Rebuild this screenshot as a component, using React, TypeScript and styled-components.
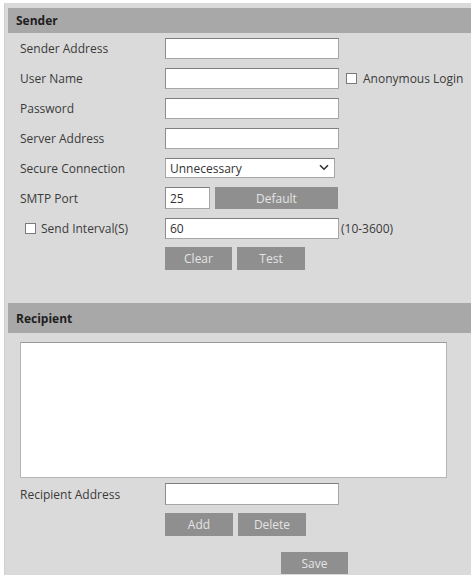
import React, { useState } from "react";
import styled, { createGlobalStyle } from "styled-components";

const GlobalStyle = createGlobalStyle`
  html, body {
    margin: 0;
    padding: 0;
    background: #fff;
  }
  body {
    font-family: "Open Sans", "Liberation Sans", Arial, sans-serif;
    font-size: 12px;
    color: #333;
  }
`;

const Panel = styled.div`
  margin: 3px 0 0 4px;
  width: 467px;
  background: #dadada;
  border-left: 1px solid #cfcfcf;
  padding: 5px 0 1px 3px;
  box-sizing: border-box;
`;

const SectionHeader = styled.div<{ $height: number }>`
  height: ${(p) => p.$height}px;
  background: #a8a8a8;
  display: flex;
  align-items: center;
  padding-left: 8px;
  font-weight: 700;
  font-size: 12px;
  color: #1e1e1e;
`;

const Section = styled.div<{ $bottom: number }>`
  padding-bottom: ${(p) => p.$bottom}px;
`;

const Row = styled.div<{ $height?: number; $indent?: number }>`
  display: flex;
  align-items: center;
  height: ${(p) => p.$height ?? 30}px;
  padding-left: ${(p) => p.$indent ?? 12}px;
`;

const SaveRow = styled(Row)`
  align-items: flex-end;
`;

const Label = styled.label`
  width: 145px;
  flex-shrink: 0;
  display: flex;
  align-items: center;
  color: #3a3a3a;
  white-space: nowrap;
`;

const TextInput = styled.input<{ $width?: number; $height?: number }>`
  width: ${(p) => p.$width ?? 174}px;
  height: ${(p) => p.$height ?? 21}px;
  box-sizing: border-box;
  border: 1px solid #a6a6a6;
  border-top-color: #7d7d7d;
  border-left-color: #8d8d8d;
  background: #fff;
  padding: 0 4px;
  font-family: inherit;
  font-size: 12px;
  color: #333;
  outline: none;
`;

const Check = styled.input.attrs({ type: "checkbox" })`
  appearance: none;
  width: 11px;
  height: 11px;
  margin: 0;
  border: 1px solid #7a7a7a;
  background: #fff;
  box-sizing: border-box;
  flex-shrink: 0;
`;

const CheckLabel = styled.label<{ $gap: number; $offset: number }>`
  display: flex;
  align-items: center;
  gap: ${(p) => p.$gap}px;
  margin-left: ${(p) => p.$offset}px;
  color: #3a3a3a;
  white-space: nowrap;
`;

const Hint = styled.span<{ $gap: number }>`
  margin-left: ${(p) => p.$gap}px;
  color: #3a3a3a;
  white-space: nowrap;
`;

const SelectWrap = styled.div`
  position: relative;
  width: 170px;
  height: 20px;
`;

const Select = styled.select`
  appearance: none;
  width: 100%;
  height: 100%;
  box-sizing: border-box;
  border: 1px solid #a6a6a6;
  border-top-color: #7d7d7d;
  background: #fff;
  padding: 0 4px;
  font-family: inherit;
  font-size: 12px;
  color: #333;
  outline: none;
`;

const Chevron = styled.svg`
  position: absolute;
  right: 6px;
  top: 6px;
  pointer-events: none;
`;

const ButtonGroup = styled.div`
  display: flex;
  gap: 5px;
`;

const GrayButton = styled.button<{ $width?: number; $height?: number }>`
  width: ${(p) => p.$width ?? 67}px;
  height: ${(p) => p.$height ?? 23}px;
  border: none;
  background: #8f8f8f;
  color: #e4e4e4;
  font-family: inherit;
  font-size: 12px;
  padding: 0;
  cursor: pointer;
`;

const RecipientList = styled.textarea`
  display: block;
  margin: 9px 0 1px 12px;
  width: 427px;
  height: 136px;
  box-sizing: border-box;
  border: 1px solid #b5b5b5;
  border-top-color: #9a9a9a;
  background: #fff;
  resize: none;
  outline: none;
`;

const App = () => {
  const [sender, setSender] = useState("");
  const [user, setUser] = useState("");
  const [password, setPassword] = useState("");
  const [server, setServer] = useState("");
  const [secure, setSecure] = useState("Unnecessary");
  const [port, setPort] = useState("25");
  const [interval, setInterval] = useState("60");
  const [recipient, setRecipient] = useState("");

  return (
    <>
      <GlobalStyle />
      <Panel>
        <Section $bottom={30}>
          <SectionHeader $height={25}>Sender</SectionHeader>
          <Row>
            <Label>Sender Address</Label>
            <TextInput value={sender} onChange={(e) => setSender(e.target.value)} />
          </Row>
          <Row>
            <Label>User Name</Label>
            <TextInput value={user} onChange={(e) => setUser(e.target.value)} />
            <CheckLabel $gap={6} $offset={7}>
              <Check />
              Anonymous Login
            </CheckLabel>
          </Row>
          <Row>
            <Label>Password</Label>
            <TextInput type="password" value={password} onChange={(e) => setPassword(e.target.value)} />
          </Row>
          <Row>
            <Label>Server Address</Label>
            <TextInput value={server} onChange={(e) => setServer(e.target.value)} />
          </Row>
          <Row>
            <Label>Secure Connection</Label>
            <SelectWrap>
              <Select value={secure} onChange={(e) => setSecure(e.target.value)}>
                <option>Unnecessary</option>
                <option>SSL</option>
                <option>TLS</option>
              </Select>
              <Chevron width="10" height="7" viewBox="0 0 10 7">
                <path d="M1 1.2 L5 5.2 L9 1.2" fill="none" stroke="#333" strokeWidth="1.6" />
              </Chevron>
            </SelectWrap>
          </Row>
          <Row>
            <Label>SMTP Port</Label>
            <ButtonGroup>
              <TextInput $width={45} $height={22} value={port} onChange={(e) => setPort(e.target.value)} />
              <GrayButton $width={123} $height={22}>Default</GrayButton>
            </ButtonGroup>
          </Row>
          <Row>
            <Label>
              <CheckLabel $gap={5} $offset={5}>
                <Check />
                Send Interval(S)
              </CheckLabel>
            </Label>
            <TextInput value={interval} onChange={(e) => setInterval(e.target.value)} />
            <Hint $gap={2}>(10-3600)</Hint>
          </Row>
          <Row>
            <Label />
            <ButtonGroup>
              <GrayButton>Clear</GrayButton>
              <GrayButton $width={68}>Test</GrayButton>
            </ButtonGroup>
          </Row>
        </Section>
        <Section $bottom={0}>
          <SectionHeader $height={30}>Recipient</SectionHeader>
          <RecipientList />
          <Row>
            <Label>Recipient Address</Label>
            <TextInput $height={22} value={recipient} onChange={(e) => setRecipient(e.target.value)} />
          </Row>
          <Row>
            <Label />
            <ButtonGroup>
              <GrayButton $width={68}>Add</GrayButton>
              <GrayButton $width={68}>Delete</GrayButton>
            </ButtonGroup>
          </Row>
          <SaveRow $height={35} $indent={273}>
            <GrayButton $height={22}>Save</GrayButton>
          </SaveRow>
        </Section>
      </Panel>
    </>
  );
};

export default App;
